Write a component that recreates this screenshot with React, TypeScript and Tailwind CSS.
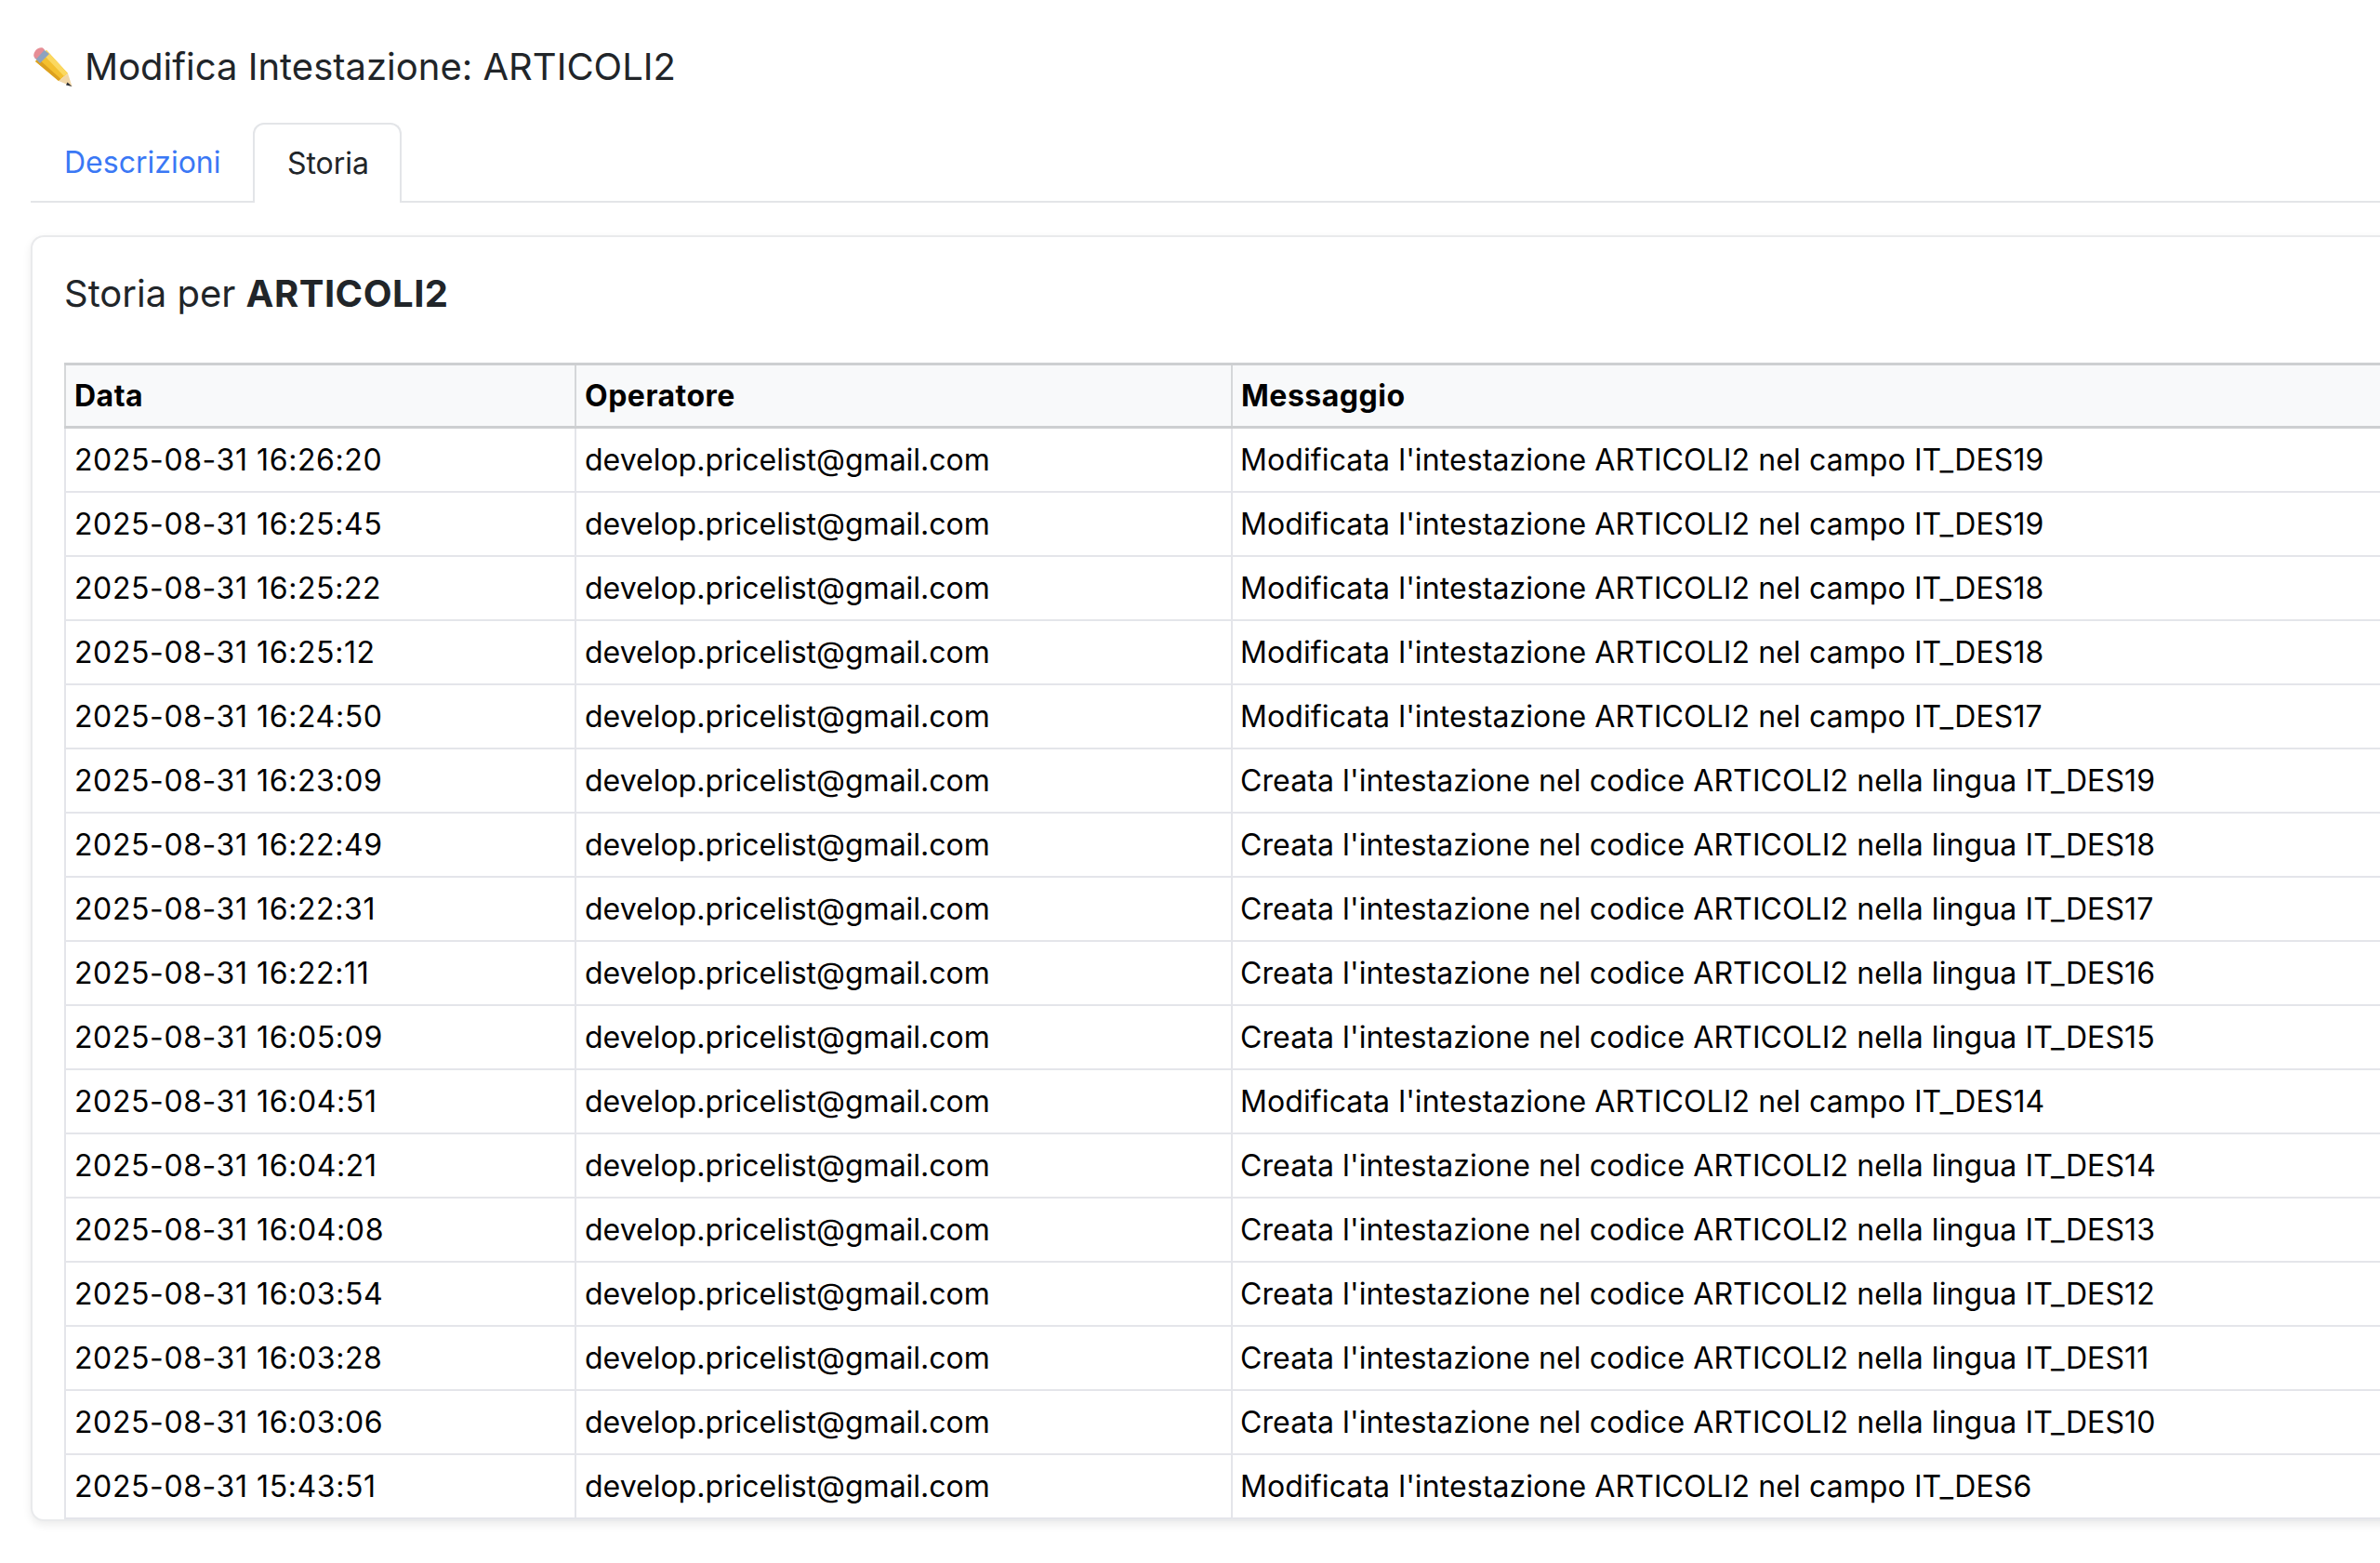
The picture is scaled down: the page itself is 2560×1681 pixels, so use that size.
import React from 'react';

const EMAIL = 'develop.pricelist@gmail.com';

const rows: [string, string][] = [
  ['2025-08-31 16:26:20', "Modificata l'intestazione ARTICOLI2 nel campo IT_DES19"],
  ['2025-08-31 16:25:45', "Modificata l'intestazione ARTICOLI2 nel campo IT_DES19"],
  ['2025-08-31 16:25:22', "Modificata l'intestazione ARTICOLI2 nel campo IT_DES18"],
  ['2025-08-31 16:25:12', "Modificata l'intestazione ARTICOLI2 nel campo IT_DES18"],
  ['2025-08-31 16:24:50', "Modificata l'intestazione ARTICOLI2 nel campo IT_DES17"],
  ['2025-08-31 16:23:09', "Creata l'intestazione nel codice ARTICOLI2 nella lingua IT_DES19"],
  ['2025-08-31 16:22:49', "Creata l'intestazione nel codice ARTICOLI2 nella lingua IT_DES18"],
  ['2025-08-31 16:22:31', "Creata l'intestazione nel codice ARTICOLI2 nella lingua IT_DES17"],
  ['2025-08-31 16:22:11', "Creata l'intestazione nel codice ARTICOLI2 nella lingua IT_DES16"],
  ['2025-08-31 16:05:09', "Creata l'intestazione nel codice ARTICOLI2 nella lingua IT_DES15"],
  ['2025-08-31 16:04:51', "Modificata l'intestazione ARTICOLI2 nel campo IT_DES14"],
  ['2025-08-31 16:04:21', "Creata l'intestazione nel codice ARTICOLI2 nella lingua IT_DES14"],
  ['2025-08-31 16:04:08', "Creata l'intestazione nel codice ARTICOLI2 nella lingua IT_DES13"],
  ['2025-08-31 16:03:54', "Creata l'intestazione nel codice ARTICOLI2 nella lingua IT_DES12"],
  ['2025-08-31 16:03:28', "Creata l'intestazione nel codice ARTICOLI2 nella lingua IT_DES11"],
  ['2025-08-31 16:03:06', "Creata l'intestazione nel codice ARTICOLI2 nella lingua IT_DES10"],
  ['2025-08-31 15:43:51', "Modificata l'intestazione ARTICOLI2 nel campo IT_DES6"],
];

const Pencil = () => (
  <svg viewBox="0 0 42 42" className="w-[42px] h-[42px] shrink-0">
    <path d="M2 15 L14 3 L37 28 L27 36 Z" fill="#f4c02f" />
    <path d="M14 3 L37 28 L33 31 L10 7 Z" fill="#fbd860" />
    <path d="M2 15 L27 36 L29.5 34 L5 12 Z" fill="#dca01f" />
    <path d="M27 36 L37 28 L41.5 42 Z" fill="#f1d6a6" />
    <path d="M36.5 37.5 L41.5 42 L35 40.5 Z" fill="#2c2e33" />
    <path d="M1 11 L10 1.5 L17 7 L7 17 Z" fill="#8ea3bf" />
    <path d="M0.5 10 C-1 5 5 -1.5 10 0.5 L12 2.5 L3 12.5 Z" fill="#e68d95" />
  </svg>
);

const App: React.FC = () => {
  return (
    <div className="w-full h-[1681px] overflow-hidden bg-white text-[#212529] font-['Inter',sans-serif]">
      <div className="w-[2640px] pl-[33px]">
        <h1 className="flex items-center h-[132px] pt-[11px] text-[40px] font-normal leading-none gap-[13px] pl-[3px]">
          <Pencil />
          <span>Modifica Intestazione: ARTICOLI2</span>
        </h1>

        <div className="flex h-[86px] border-b-2 border-[#e3e5e8] text-[32px]">
          <div className="w-[239px] flex items-center pl-[36px] pt-[2px] text-[#3a78f5]">Descrizioni</div>
          <div className="w-[160px] h-[86px] pl-[2px] flex items-center justify-center bg-white border-2 border-b-0 border-[#e3e5e8] rounded-t-[12px]">
            Storia
          </div>
        </div>

        <div className="mt-[35px] border-2 border-[#e9eaec] rounded-[14px] bg-white shadow-[0_4px_10px_rgba(0,0,0,0.08)] pt-[36px] pl-[34px]">
          <h2 className="h-[99px] text-[40px] leading-[50px] font-normal">
            Storia per <strong className="font-bold tracking-[0.5px]">ARTICOLI2</strong>
          </h2>
          <table className="w-[2560px] table-fixed border-collapse text-[32px]">
            <colgroup>
              <col className="w-[549px]" />
              <col className="w-[706px]" />
              <col />
            </colgroup>
            <thead>
              <tr className="h-[68px] bg-[#f8f9fa] border-y-[3px] border-[#cdcfd1]">
                {['Data', 'Operatore', 'Messaggio'].map(h => (
                  <th key={h} className="px-[9px] pt-[1px] text-left font-bold tracking-[0.5px] text-black border-x-2 border-[#d5d7d9]">{h}</th>
                ))}
              </tr>
            </thead>
            <tbody>
              {rows.map(([date, msg]) => (
                <tr key={date} className="h-[69px] border-b-2 border-[#e4e5ea] text-black">
                  <td className="px-[9px] pt-[2px] border-x-2 border-[#e4e5ea] tracking-[0.6px]">{date}</td>
                  <td className="px-[9px] pt-[2px] border-x-2 border-[#e4e5ea]">{EMAIL}</td>
                  <td className="px-[8px] pt-[2px] border-x-2 border-[#e4e5ea] tracking-[0.1px]">{msg}</td>
                </tr>
              ))}
            </tbody>
          </table>
        </div>
      </div>
    </div>
  );
};

export default App;
